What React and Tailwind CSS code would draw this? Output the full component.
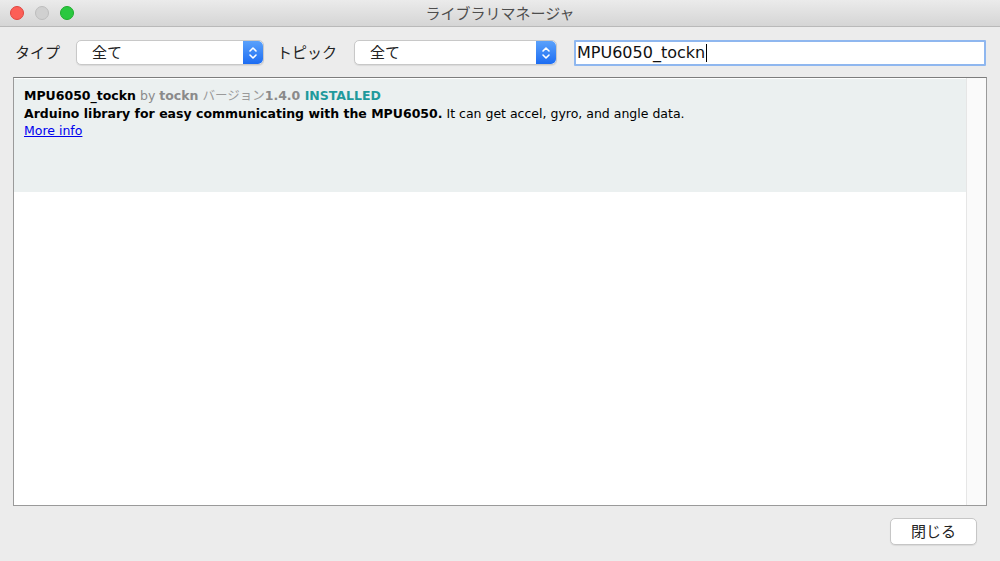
import React from 'react';

const jp = { fontFamily: '"Noto Sans CJK JP", "Noto Sans", sans-serif' };
const verdana = { fontFamily: '"DejaVu Sans", "Noto Sans CJK JP", sans-serif' };

function Stepper() {
  return (
    <div className="w-[20px] self-stretch rounded-r-[5px] bg-gradient-to-b from-[#5aa1fb] to-[#1c6cf2] flex items-center justify-center">
      <svg width="10" height="16" viewBox="0 0 10 16" fill="none" stroke="white" strokeWidth="1.6" strokeLinecap="round" strokeLinejoin="round">
        <path d="M2 6 L5 3 L8 6" />
        <path d="M2 10 L5 13 L8 10" />
      </svg>
    </div>
  );
}

function Select({ width, value }) {
  return (
    <div
      className="h-[25px] flex items-stretch bg-white rounded-[5px] border border-[#c8c8c8] shadow-[0_1px_1px_rgba(0,0,0,0.08)]"
      style={{ width }}
    >
      <div className="flex-1 flex items-center pl-[15px] text-[15px] text-[#222]" style={jp}>
        {value}
      </div>
      <Stepper />
    </div>
  );
}

function App() {
  return (
    <div className="w-[1000px] h-[561px] bg-[#ececec] flex flex-col overflow-hidden">
      {/* Title bar */}
      <div className="h-[27px] shrink-0 relative flex items-center justify-center bg-gradient-to-b from-[#ebebeb] to-[#d5d5d5] border-b border-[#b9b9b9]">
        <div className="absolute left-[10px] top-[6px] flex gap-[11px]">
          <span className="w-[14px] h-[14px] rounded-full bg-[#fc5f57] border border-[#e0443e]" />
          <span className="w-[14px] h-[14px] rounded-full bg-[#d0d0d0] border border-[#bdbdbd]" />
          <span className="w-[14px] h-[14px] rounded-full bg-[#2ac840] border border-[#1dad2b]" />
        </div>
        <span className="text-[15px] text-[#4d4d4d]" style={jp}>ライブラリマネージャ</span>
      </div>

      {/* Toolbar */}
      <div className="flex items-center h-[50px] pl-[15px] pr-[14px] pt-[1px]">
        <span className="text-[15px] text-[#222] w-[61px]" style={jp}>タイプ</span>
        <Select width={188} value="全て" />
        <span className="text-[15px] text-[#222] ml-[13px] w-[77px]" style={jp}>トピック</span>
        <Select width={203} value="全て" />
        <div className="ml-[17px] flex-1 h-[26px] bg-white border-2 border-[#8fb7ef] rounded-[1px] flex items-center pl-[1px]">
          <span className="text-[16px] text-[#111] leading-none" style={{ fontFamily: '"DejaVu Sans", sans-serif' }}>MPU6050_tockn</span>
          <span className="w-[1px] h-[18px] bg-black ml-[1px]" />
        </div>
      </div>

      {/* List panel */}
      <div className="mx-[13px] h-[429px] border border-[#9a9a9a] border-t-[#7d7d7d] bg-white flex">
        <div className="flex-1 flex flex-col">
          <div className="h-[113px] mt-[1px] bg-[#ebf0f0] px-[10px] pt-[7px] text-[12.5px] leading-[17.5px]" style={verdana}>
            <div>
              <span className="font-bold text-black">MPU6050_tockn</span>
              <span className="text-[#8a8a8a]"> by </span>
              <span className="font-bold text-[#8a8a8a]">tockn</span>
              <span className="text-[#8a8a8a]"> </span>
              <span className="text-[#9a9a9a]" style={jp}>バージョン</span>
              <span className="font-bold text-[#8a8a8a]">1.4.0</span>
              <span className="font-bold text-[#1f9a9c]"> INSTALLED</span>
            </div>
            <div className="text-black">
              <span className="font-bold">Arduino library for easy communicating with the MPU6050.</span>
              <span> It can get accel, gyro, and angle data.</span>
            </div>
            <div>
              <span className="text-[#0000ee] underline">More info</span>
            </div>
          </div>
        </div>
        <div className="w-[20px] bg-[#fafafa] border-l border-[#e6e6e6]" />
      </div>

      {/* Footer */}
      <div className="flex justify-end pr-[23px] pt-[12px]">
        <div className="w-[87px] h-[27px] bg-white border border-[#c6c6c6] rounded-[5px] shadow-[0_1px_1px_rgba(0,0,0,0.08)] flex items-center justify-center text-[15px] text-[#222]" style={jp}>
          閉じる
        </div>
      </div>
    </div>
  );
}

export default App;
